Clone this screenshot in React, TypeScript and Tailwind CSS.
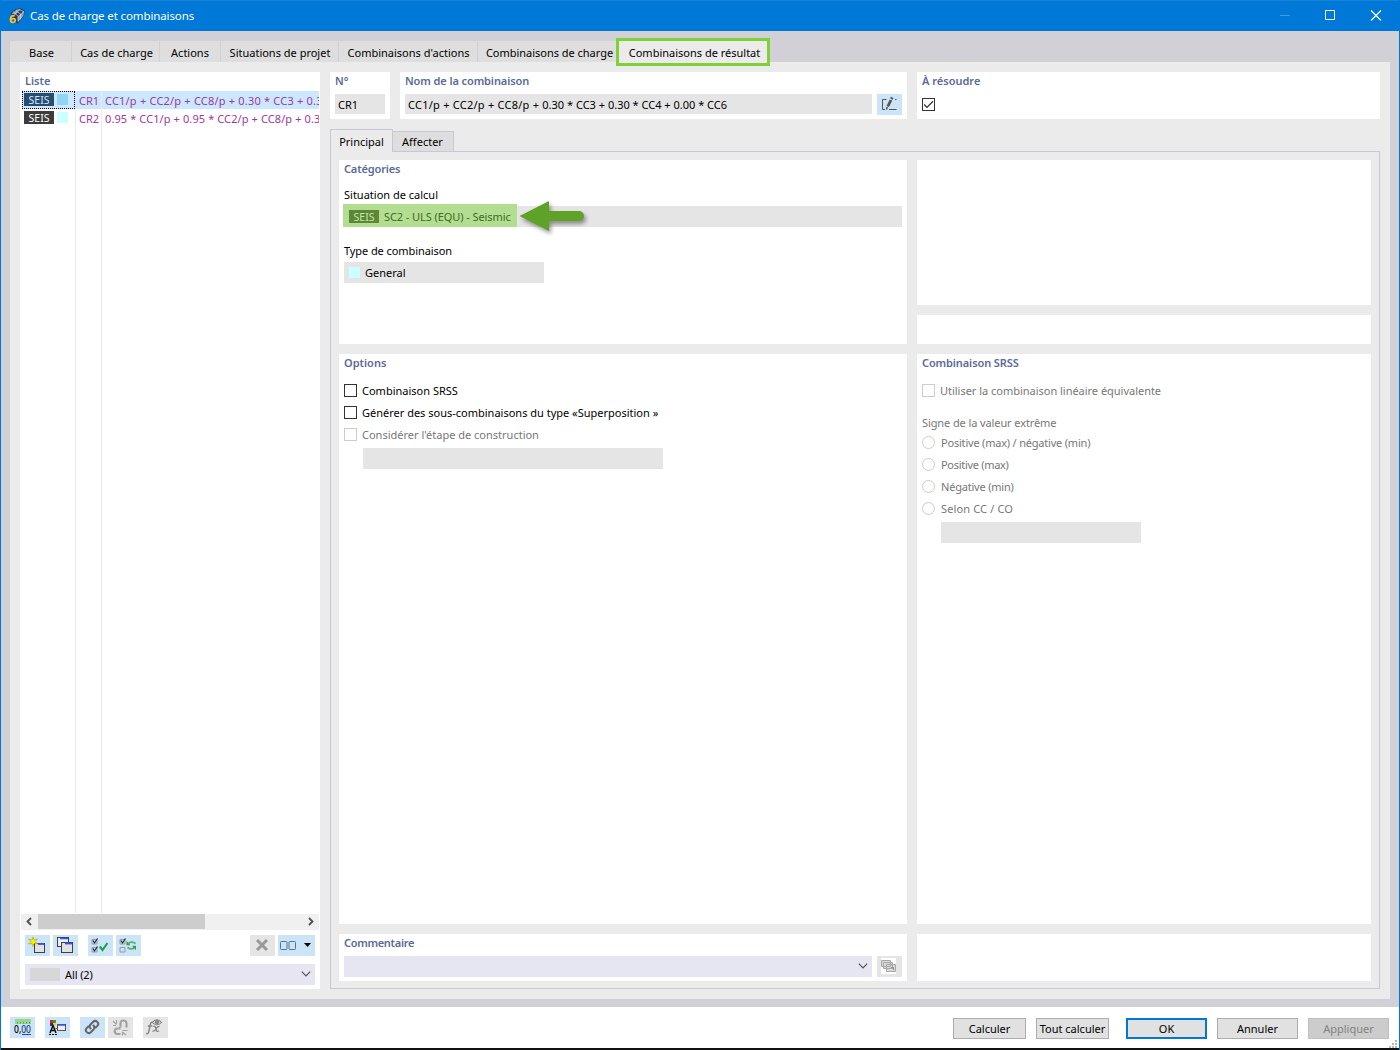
import React from "react";

type Box = { className?: string; children?: React.ReactNode };

function Title({ children }: Box) {
  return <div className="text-[11px] leading-[16px] font-semibold text-[#5b6a98]">{children}</div>;
}

function Panel({ className = "", children }: Box) {
  return <section className={`shrink-0 bg-white px-[5px] pt-px ${className}`}>{children}</section>;
}

function Seis({ className = "" }: Box) {
  return (
    <span className={`flex h-[13px] w-[30px] shrink-0 items-center justify-center pt-px text-[10.5px] leading-[13px] ${className}`}>
      SEIS
    </span>
  );
}

function Check({ on, disabled, className = "" }: { on?: boolean; disabled?: boolean; className?: string }) {
  return (
    <span className={`flex size-[13px] shrink-0 border bg-white ${disabled ? "border-[#cccccc]" : "border-[#333333]"} ${className}`}>
      {on && (
        <svg viewBox="0 0 11 11" className="size-[11px]" fill="none" stroke="#333" strokeWidth="1.3">
          <path d="M1.2 5.5 4 8.4 10 2.3" />
        </svg>
      )}
    </span>
  );
}

function Chevron({ className = "" }: Box) {
  return (
    <svg viewBox="0 0 10 6" className={`h-[6px] w-[10px] shrink-0 ${className}`} fill="none" stroke="#505050" strokeWidth="1.1">
      <path d="M.8.7 5 4.9 9.2.7" />
    </svg>
  );
}

function Tool({ className = "bg-[#cce4f7] w-[25px]", children }: Box) {
  return <button className={`flex h-[21px] shrink-0 items-center justify-center ${className}`}>{children}</button>;
}

function AppLogo() {
  return (
    <svg viewBox="0 0 16 16" className="size-4">
      <path d="M1.500 5 6 1.500 11 0l4.800 2.500-1 5.500L9 15.500l-4-2Z" fill="#2b3d56" />
      <path d="M2.500 5.500 7.500 1.800 11 .8 6.500 6.500ZM9 9l6-5.800-.7 4.800L9 14Z" fill="#97a7bc" />
      <path d="M4.500 4 9.500 8.500M7 2.500 12 6.500M10 1.300 15 4M5.500 7 11 1.500M9 13.500V8.500L15 3.500M11.500 11.500V6.500" fill="none" stroke="#d5dde8" strokeWidth=".7" />
      <path d="M5.700 8C2.700 7 1.500 9 1.500 11.500c0 4 4.700 3.600 4.700.8 0-2.300-3.200-2.300-4.400-.3" fill="none" stroke="#f4c430" strokeWidth="1.800" />
    </svg>
  );
}

const TABS: [string, string][] = [
  ["Base", "w-[62px] pl-[2px]"],
  ["Cas de charge", "w-[88px] pl-[2px]"],
  ["Actions", "w-[61px]"],
  ["Situations de projet", "w-[118px] pl-px"],
  ["Combinaisons d'actions", "w-[139px] pl-px"],
  ["Combinaisons de charge", "w-[141px] pl-[3px] tracking-[-.02px]"],
];

function List() {
  return (
    <section className="flex w-[300px] shrink-0 flex-col bg-white pt-px">
      <div className="h-[18px] pl-[5px]"><Title>Liste</Title></div>
      <div className="mr-px ml-[2px] flex h-[822px] flex-col">
        <div className="flex h-[18px] shrink-0 bg-[#cce8ff] leading-[20px] text-[#a136a1]">
          <div className="flex w-[53px] shrink-0 items-center gap-[3px] border border-dotted border-black pb-px pl-px">
            <Seis className="bg-[#2a4d6e] text-[#cce8ff]" /><span className="size-[11px] bg-[#8fd6f5]" />
          </div>
          <div className="w-[27px] shrink-0 border-r border-[#ebebeb] pl-[4px]">CR1</div>
          <div className="min-w-0 grow overflow-hidden pl-[3px] tracking-[.2px] whitespace-nowrap">CC1/p + CC2/p + CC8/p + 0.30 * CC3 + 0.3</div>
        </div>
        <div className="flex h-[18px] shrink-0 leading-[20px] text-[#a136a1]">
          <div className="flex w-[54px] shrink-0 items-center gap-[3px] border-r border-[#ebebeb] pb-px pl-[2px]">
            <Seis className="bg-[#3c3c3c] text-white" /><span className="size-[11px] bg-[#ccffff]" />
          </div>
          <div className="w-[26px] shrink-0 border-r border-[#ebebeb] pl-[3px]">CR2</div>
          <div className="min-w-0 grow overflow-hidden pl-[3px] tracking-[.1px] whitespace-nowrap">0.95 * CC1/p + 0.95 * CC2/p + CC8/p + 0.3</div>
        </div>
        <div className="flex grow">
          <div className="w-[54px] border-r border-[#ebebeb]" />
          <div className="w-[26px] border-r border-[#ebebeb]" />
        </div>
      </div>
      <div className="mx-px mt-px flex h-[16px] items-start bg-[#f0f0f0]">
        <svg viewBox="0 0 17 15" className="h-[15px] w-[17px]" fill="none" stroke="#505050" strokeWidth="1.800"><path d="M10 4 6.500 7.500 10 11" /></svg>
        <div className="h-[15px] w-[167px] bg-[#cdcdcd]" />
        <svg viewBox="0 0 17 15" className="ml-auto h-[15px] w-[17px]" fill="none" stroke="#505050" strokeWidth="1.800"><path d="M7 4 10.500 7.500 7 11" /></svg>
      </div>
      <div className="mt-[5px] flex px-[5px]">
        <Tool className="w-[25px] bg-[#cce4f7] pr-px pb-px">
          <svg viewBox="0 0 18 18" className="size-[18px]">
            <rect x="6.500" y="7.500" width="10" height="9" fill="#e2e2e2" stroke="#404040" />
            <path d="M10 8h6" stroke="#3d52e8" strokeWidth="1.800" />
            <path d="M5 1 6 4 9.500 3 7 5.500 9.500 8 6 7.500 5 10.500 4 7.500.5 8 3 5.500.5 3 4 4Z" fill="#ffee00" stroke="#a8a010" strokeWidth=".6" />
          </svg>
        </Tool>
        <Tool className="ml-[3px] w-[25px] bg-[#cce4f7] pr-px pb-px">
          <svg viewBox="0 0 18 18" className="size-[18px]" stroke="#404040">
            <rect x="1.500" y="1.500" width="11" height="9" fill="#e8f1f8" /><path d="M4 2.500h8" stroke="#3d52e8" strokeWidth="1.500" />
            <rect x="5.500" y="6.500" width="11" height="10" fill="#e2e2e2" /><path d="M9 7.500h7" stroke="#3d52e8" strokeWidth="1.800" />
          </svg>
        </Tool>
        <Tool className="ml-[10px] w-[25px] bg-[#cce4f7] pr-[2px] pb-px"><ChecksIcon kind="check" /></Tool>
        <Tool className="ml-[3px] w-[25px] bg-[#cce4f7] pr-[2px] pb-px"><ChecksIcon kind="swap" /></Tool>
        <Tool className="ml-auto w-[25px] bg-[#e5e5e5] pr-px pb-px">
          <svg viewBox="0 0 12 12" className="size-3" stroke="#999" strokeWidth="3"><path d="m1 1 10 10M11 1 1 11" /></svg>
        </Tool>
        <Tool className="ml-[3px] w-[37px] gap-[8px] bg-[#cce4f7] pr-[2px]">
          <svg viewBox="0 0 16 9" className="h-[9px] w-4" fill="none" stroke="#56748a"><rect x=".5" y=".5" width="6.500" height="8" rx="1" /><rect x="9" y=".5" width="6.500" height="8" rx="1" /></svg>
          <svg viewBox="0 0 7 4" className="-mt-px h-1 w-[7px]"><path d="M0 0h7L3.500 4Z" /></svg>
        </Tool>
      </div>
      <div className="mx-[5px] mt-[8px] flex h-[21px] items-center bg-[#e6e6f2] pr-[4px] pl-[5px]">
        <span className="h-[13px] w-[30px] bg-[#d7d7d7]" />
        <span className="ml-[5px] grow pt-px tracking-[-.1px]">All (2)</span>
        <Chevron className="-mt-px" />
      </div>
    </section>
  );
}

function ChecksIcon({ kind }: { kind: "check" | "swap" }) {
  return (
    <svg viewBox="0 0 17 16" className="h-4 w-[17px]" fill="none">
      <path d="M1 2.500h5v4.500H1zM1 10.500h5V15H1z" stroke="#8795a0" strokeWidth=".9" />
      <path d="m2 3.500 1.500 2.500L6.500 1.500" stroke="#222" strokeWidth="1.200" />
      {kind === "check" ? (
        <>
          <path d="m2 11.500 1.500 2.500L6.500 9.500" stroke="#222" strokeWidth="1.200" />
          <path d="m8.800 9.500 2.700 3.500 5-7" stroke="#14a549" strokeWidth="2.100" />
        </>
      ) : (
        <>
          <path d="M9.500 6.500c1.500-1.800 5-1.800 7 .2M15.500 10.500c-1.500 1.800-5 1.800-7-.2" stroke="#4caf6a" strokeWidth="1.700" />
          <path d="M7.500 3.800v4.400h4ZM17 13.200V8.800h-4Z" fill="#2fa050" />
        </>
      )}
    </svg>
  );
}

function Header() {
  return (
    <div className="flex h-[47px]">
      <Panel className="w-[60px]"><Title>N°</Title><div className="mt-[5px] h-5 w-[50px] bg-[#e5e5e5] pl-[3px] leading-[21px]">CR1</div></Panel>
      <Panel className="ml-[10px] w-[507px]">
        <div className="tracking-[-.1px]"><Title>Nom de la combinaison</Title></div>
        <div className="mt-[5px] flex">
          <div className="h-5 w-[467px] bg-[#e5e5e5] pl-[3px] leading-[21px] whitespace-pre">
            <span className="tracking-[.24px]">CC1/p + CC2/p + CC8/p + </span><span>0.30 * CC3 + 0.30 * CC4 + 0.00 * CC6</span>
          </div>
          <Tool className="ml-[5px] w-[25px] bg-[#cce4f7]">
            <svg viewBox="0 0 17 16" className="-mt-px h-4 w-[17px]" fill="none" stroke="#555">
              <path d="M5.500 3.500h-4v10H4M8 13.500h7.500M14 3.500h1.500" />
              <path d="M6.800 10.500 10 4" strokeWidth="2.800" />
              <path d="M10.400 3 11.200 1.400" strokeWidth="2.800" />
              <path d="m5.400 13.500.8-2.500" strokeWidth="1.500" />
            </svg>
          </Tool>
        </div>
      </Panel>
      <Panel className="ml-[10px] w-[463px]"><Title>À résoudre</Title><Check on className="mt-[9px]" /></Panel>
    </div>
  );
}

function Option({ label, disabled }: { label: string; disabled?: boolean }) {
  return (
    <div className={`flex h-[22px] items-center gap-[5px] ${disabled ? "text-[#777777]" : ""}`}>
      <Check disabled={disabled} className="mb-px" /><span>{label}</span>
    </div>
  );
}

function Radio({ label, className = "" }: { label: string; className?: string }) {
  return (
    <div className="flex h-[22px] items-center gap-[6px]">
      <span className="mb-px size-[13px] rounded-full border border-[#cccccc]" /><span className={className}>{label}</span>
    </div>
  );
}

function Principal() {
  return (
    <div className="mt-[10px] flex grow flex-col">
      <div className="flex h-[22px] items-end">
        <div className="z-10 -mb-px h-[23px] w-[63px] border border-b-0 border-[#c8c8d4] bg-[#ebebeb] text-center leading-[23px]">Principal</div>
        <div className="-ml-px h-[20px] w-[62px] border border-b-0 border-[#c8c8d4] bg-[#dedede] pr-px text-center leading-[20px]">Affecter</div>
      </div>
      <div className="flex h-[838px] gap-[10px] border border-[#c8c8d4] px-2 pt-[8px]">
        <div className="flex w-[568px] flex-col gap-[10px]">
          <Panel className="h-[184px]">
            <div className="tracking-[-.15px]"><Title>Catégories</Title></div>
            <div className="mt-[9px] leading-[18px]">Situation de calcul</div>
            <div className="relative mt-[2px] h-[21px] w-[558px] bg-[#e5e5e5]">
              <div className="absolute -top-[2px] -left-px flex h-[23px] w-[174px] items-center bg-[#b3de92] pt-[3px] pl-[6px] text-[#3d6b23]">
                <Seis className="-mt-px bg-[#5c8638] text-[#c4e7a8]" /><span className="ml-[5px] tracking-[-.08px] whitespace-nowrap">SC2 - ULS (EQU) - Seismic</span>
              </div>
              <svg viewBox="0 0 72 40" className="absolute -top-[8px] left-[174px] h-10 w-[72px] drop-shadow-[2px_3px_2px_rgba(0,0,0,.4)]">
                <path d="M1.500 18 31 3v10h30a5 5 0 0 1 0 10H31v10Z" fill="#5ea327" />
              </svg>
            </div>
            <div className="mt-[15px] leading-[18px] tracking-[-.08px]">Type de combinaison</div>
            <div className="mt-[2px] flex h-[21px] w-[200px] items-center bg-[#e5e5e5] pl-[5px]"><span className="size-[11px] bg-[#ccffff]" /><span className="ml-[5px]">General</span></div>
          </Panel>
          <Panel className="h-[570px]">
            <Title>Options</Title>
            <div className="mt-[9px]">
              <Option label="Combinaison SRSS" />
              <Option label="Générer des sous-combinaisons du type «Superposition »" />
              <Option label="Considérer l'étape de construction" disabled />
            </div>
            <div className="mt-[2px] ml-[19px] h-[21px] w-[300px] bg-[#e5e5e5]" />
          </Panel>
          <Panel className="h-[47px]">
            <div className="tracking-[-.3px]"><Title>Commentaire</Title></div>
            <div className="mt-[5px] flex">
              <div className="flex h-[21px] w-[528px] items-center justify-end bg-[#e6e6f2] pr-[4px]"><Chevron className="-mt-px" /></div>
              <Tool className="ml-[5px] w-[25px] bg-[#e5e5e5] pr-[2px] pb-px">
                <svg viewBox="0 0 17 16" className="h-4 w-[17px]" fill="#d8d8d8" stroke="#a8a8a8">
                  <path d="M1 0h15v16H1z" fill="#fff" stroke="none" />
                  <path d="M1.500 2.500h9v6h-9zM3.500 4.500h9v6h-9zM6.500 6.500h9v7h-9z" />
                  <path d="M11 9.500h2.500V12" fill="none" stroke="#909090" />
                </svg>
              </Tool>
            </div>
          </Panel>
        </div>
        <div className="flex grow flex-col gap-[10px]">
          <Panel className="h-[145px]" />
          <Panel className="h-[29px]" />
          <Panel className="h-[570px] text-[#777777]">
            <div className="tracking-[-.1px]"><Title>Combinaison SRSS</Title></div>
            <div className="mt-[9px] tracking-[-.02px]"><Option label="Utiliser la combinaison linéaire équivalente" disabled /></div>
            <div className="mt-[12px] leading-[18px] tracking-[-.1px]">Signe de la valeur extrême</div>
            <Radio label="Positive (max) / négative (min)" className="tracking-[-.2px]" />
            <Radio label="Positive (max)" className="tracking-[-.3px]" />
            <Radio label="Négative (min)" className="tracking-[-.2px]" />
            <Radio label="Selon CC / CO" className="tracking-[.14px]" />
            <div className="mt-[2px] ml-[19px] h-[21px] w-[200px] bg-[#e5e5e5]" />
          </Panel>
          <Panel className="h-[47px]" />
        </div>
      </div>
    </div>
  );
}

function Button({ label, className }: { label: string; className: string }) {
  return <button className={`flex h-[21px] shrink-0 items-center justify-center pt-px whitespace-nowrap ${className}`}>{label}</button>;
}

function Footer() {
  return (
    <footer className="relative mt-2 flex h-[43px] shrink-0 items-start border-b-2 border-[#111] bg-white pt-[10px] pl-[9px]">
      <Tool className="w-[25px] bg-[#cce4f7] pr-px">
        <svg viewBox="0 0 19 17" className="h-[17px] w-[19px]">
          <path d="M2 0h16v5H2z" fill="#97d68c" />
          <path d="M4.500 4.500V3m3 1.500V3m3 1.500V3m3 1.500V3m3 1.500V3" stroke="#5a9b53" />
          <text x="1" y="13.500" fontSize="10" fontFamily="Noto Sans" fontWeight="500" textLength="17" lengthAdjust="spacingAndGlyphs">0,<tspan fill="#23407c">00</tspan></text>
          <path d="M9 15.500h9" stroke="#2845aa" />
        </svg>
      </Tool>
      <Tool className="ml-[10px] w-[25px] bg-[#cce4f7] pr-px pb-px">
        <svg viewBox="0 0 17 17" className="size-[17px]">
          <path d="M1 1h3v3H1z" fill="#ff1010" /><path d="M4 1h3v3H4z" fill="#20b020" />
          <path d="M1 4h3v3H1z" fill="#1030f0" /><path d="M4 4h3v3H4z" fill="#ffd800" />
          <path d="M1 14 4 6.500 7 14M2.500 11.500h3" fill="none" stroke="#111" strokeWidth="1.500" />
          <path d="M0 15.500h8" stroke="#111" strokeDasharray="2 1" />
          <rect x="8.500" y="5.500" width="8" height="6" fill="#eee" stroke="#555" /><path d="M9 6h7" stroke="#3d52e8" strokeWidth="1.500" /><path d="M6.500 9.500H8" stroke="#555" />
        </svg>
      </Tool>
      <Tool className="ml-[10px] w-[25px] bg-[#cce4f7] pr-px pb-px"><LinkIcon /></Tool>
      <Tool className="ml-[3px] w-[25px] bg-[#e5e5e5] pr-px pb-px">
        <svg viewBox="0 0 17 17" className="size-[17px]" fill="none" stroke="#a3a3a3">
          <path d="M8.500 8.500V4.500a3 3 0 0 1 6 0V8.500M8.500 9.500H5a2.800 2.800 0 0 0 0 5.500h3.500" strokeWidth="2.200" />
          <path d="M4.500 1v3.500M1 2l3.500 3.500M1 6.500h3M10.500 11.500h5M10.500 13l3.500 3M10.500 13.500v3" strokeWidth="1.200" />
        </svg>
      </Tool>
      <Tool className="ml-[10px] w-[25px] bg-[#e5e5e5] pr-[3px] pb-px">
        <svg viewBox="0 0 18 18" className="size-[18px]" fill="none" stroke="#858585">
          <path d="M8 4.500C6 3.500 5.500 5.500 5.200 7L3.800 13.500C3.500 15.500 2.500 16 1.200 15.500M2.800 8h4.500" strokeWidth="1.400" />
          <path d="M8 8.500c2-1 2.500 0 3 2.500s1 3 3 1.800M14.500 8.500c-2-.5-2.500 1-3.500 2.500s-1.500 2.500-3.500 2" strokeWidth="1.300" />
          <path d="M7.500 4.500c2.200-3.500 6.500-3.500 9 0-2.500 3-6.800 3-9 0Z" strokeWidth="1.100" /><circle cx="12" cy="4.300" r="1.700" fill="#858585" />
        </svg>
      </Tool>
      <div className="mt-px mr-[10px] ml-auto flex">
        <Button label="Calculer" className="w-[73px] border border-[#adadad] bg-[#e1e1e1]" />
        <Button label="Tout calculer" className="ml-[10px] w-[73px] border border-[#adadad] bg-[#e1e1e1]" />
        <Button label="OK" className="ml-[17px] w-[81px] border-2 border-[#0078d7] bg-[#e1e1e1]" />
        <Button label="Annuler" className="ml-[10px] w-[81px] border border-[#adadad] bg-[#e1e1e1]" />
        <Button label="Appliquer" className="ml-[10px] w-[81px] border border-[#bfbfbf] bg-[#cccccc] text-[#838383]" />
      </div>
      <svg viewBox="0 0 8 8" className="absolute right-[2px] bottom-0 size-2" fill="#b8b8b8">
        <path d="M6 0h2v2H6zM3 3h2v2H3zM6 3h2v2H6zM0 6h2v2H0zM3 6h2v2H3zM6 6h2v2H6z" />
      </svg>
    </footer>
  );
}

function LinkIcon() {
  return (
    <svg viewBox="0 0 16 16" className="size-4" fill="none" stroke="#666" strokeWidth="2" strokeLinecap="round">
      <path d="M6.500 9.500a3 3 0 0 1 0-4L9.200 2.800a2.900 2.900 0 0 1 4.100 4.100L11.700 8.500" />
      <path d="M9.500 6.500a3 3 0 0 1 0 4L6.800 13.200a2.900 2.900 0 0 1-4.100-4.100L4.300 7.500" />
    </svg>
  );
}

export default function App() {
  return (
    <div className="flex h-[1050px] w-[1400px] flex-col border-x border-[#0078d7] bg-[#d1d0d7] font-['Noto_Sans','Open_Sans',sans-serif] text-[11px] leading-[16px] text-black">
      <header className="flex h-[31px] shrink-0 items-center border-t border-[#1883d7] bg-[#0078d7] pl-[8px] text-white">
        <AppLogo /><span className="mb-px ml-[5px] text-[11.5px] tracking-[-.12px]">Cas de charge et combinaisons</span>
        <svg viewBox="0 0 110 14" className="mr-[15px] ml-auto h-[14px] w-[110px]" fill="none" stroke="#fff"><path d="M6 6.500h10" stroke="#409ae1" /><path d="M51.500 1.500h9v9h-9z" /><path d="m97 1.500 10 10m0-10-10 10" strokeWidth="1.200" /></svg>
      </header>
      <nav className="flex h-[31px] shrink-0 items-end pl-[9px]">
        {TABS.map(([t, w]) => <div key={t} className={`h-[21px] shrink-0 border-r border-[#d1d0d7] bg-[#dedede] pt-px text-center leading-[21px] whitespace-nowrap ${w}`}>{t}</div>)}
        <div className="z-10 -mb-[4px] -ml-[3px] h-[28px] w-[154px] border-[3px] border-[#80d038] bg-[#ebebeb] pl-[3px] text-center leading-[23px]">Combinaisons de résultat</div>
      </nav>
      <main className="mx-[9px] flex h-[937px] shrink-0 gap-[10px] bg-[#ebebeb] p-[10px]">
        <List />
        <div className="flex grow flex-col"><Header /><Principal /></div>
      </main>
      <Footer />
    </div>
  );
}
